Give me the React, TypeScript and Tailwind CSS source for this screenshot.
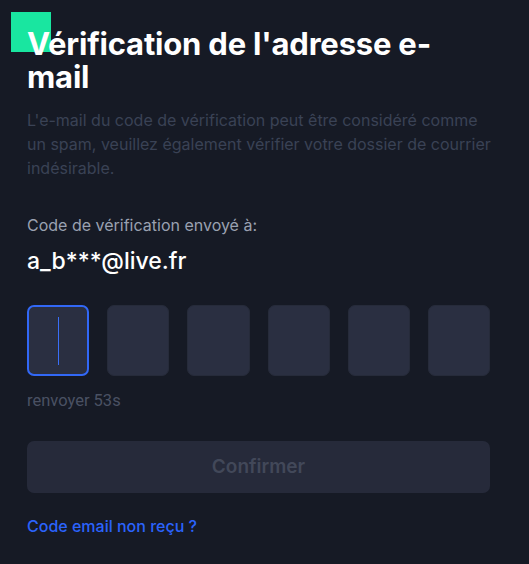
import React from "react";

const cells = [0, 1, 2, 3, 4, 5];

function App() {
  return (
    <main
      className="relative min-h-[564px] w-full bg-[#161a25] pl-[27px] pr-[39px] pt-[27px]"
      style={{ fontFamily: "Inter, 'Noto Sans', sans-serif" }}
    >
      <div className="absolute left-[11px] top-[12px] h-[40px] w-[40px] bg-[#19e6a0]" />
      <h1 className="relative text-[31px] font-bold leading-[33px] tracking-[-0.2px] text-white">
        Vérification de l'adresse e-mail
      </h1>
      <p className="-mr-[20px] mt-[15px] whitespace-nowrap text-[16px] leading-[24px] text-[#3a4255]">
        L'e-mail du code de vérification peut être considéré comme
        <br />
        un spam, veuillez également vérifier votre dossier de courrier
        <br />
        indésirable.
      </p>
      <div className="mt-[33px] text-[16px] leading-[24px] text-[#9aa1b1]">
        Code de vérification envoyé à:
      </div>
      <div className="mt-[10px] text-[23px] font-medium leading-[28px] text-white">
        a_b***@live.fr
      </div>
      <div className="mt-[30px] grid grid-cols-6 gap-[18px]">
        {cells.map((i) => (
          <div
            key={i}
            className={
              i === 0
                ? "flex h-[71px] items-center justify-center rounded-[7px] border-2 border-[#3268f6] bg-[#2a2f41]"
                : "flex h-[71px] items-center justify-center rounded-[7px] border border-[#262b3a] bg-[#2a2f41]"
            }
          >
            {i === 0 && <div className="h-[48px] w-[1px] bg-[#3a6ff8]" />}
          </div>
        ))}
      </div>
      <div
        className="mt-[13px] text-[16.5px] leading-[24px] text-[#4a5163]"
        style={{ fontFamily: "Roboto, sans-serif" }}
      >
        renvoyer 53s
      </div>
      <button className="mt-[28px] flex h-[52px] w-full items-center justify-center rounded-[7px] bg-[#262a3a] text-[19px] font-semibold text-[#424859]">
        Confirmer
      </button>
      <a className="mt-[21px] block text-[16px] font-medium leading-[24px] text-[#2b63fc]">
        Code email non reçu ?
      </a>
    </main>
  );
}

export default App;
